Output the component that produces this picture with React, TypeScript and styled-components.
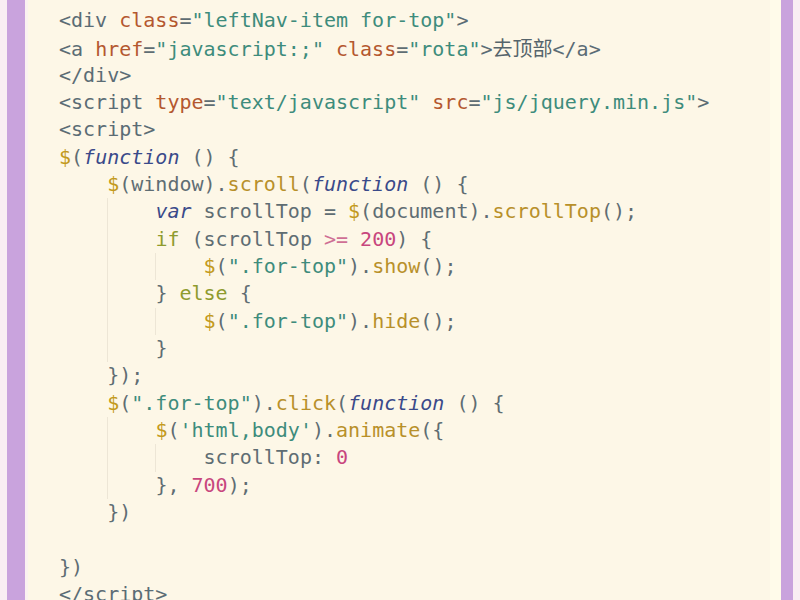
import React from "react";
import styled, { createGlobalStyle, css } from "styled-components";

const Global = createGlobalStyle`
  html, body { margin: 0; padding: 0; width: 800px; height: 600px; overflow: hidden; background: #fdf7e7; }
  #root { width: 800px; height: 600px; }
`;

type Kind = "t" | "a" | "s" | "d" | "m" | "k" | "c" | "n" | "o" | "p";
type Tok = [Kind, string];
type Line = { indent: number; toks: Tok[] };

const colors: Record<Kind, string> = {
  t: "#5b6c75",
  a: "#b4582f",
  s: "#3e8c7c",
  d: "#c39a1c",
  m: "#b8902a",
  k: "#3a4a8a",
  c: "#8f9b2e",
  n: "#c8467e",
  o: "#cf6f95",
  p: "#5f6d73",
};

const Shell = styled.div`
  display: flex;
  width: 800px;
  height: 600px;
  overflow: hidden;
  background: #faf0f2;
`;

const Edge = styled.div<{ $w: number; $bg: string }>`
  flex: 0 0 ${(p) => p.$w}px;
  background: ${(p) => p.$bg};
`;

const Panel = styled.div`
  flex: 1;
  background: #fdf7e7;
  padding: 7px 0 0 31px;
  overflow: hidden;
`;

const Code = styled.pre`
  margin: 0;
  font-family: "DejaVu Sans Mono", "Noto Sans CJK SC", monospace;
  font-size: 20px;
  line-height: 27.33px;
  color: #5f6d73;
`;

const Row = styled.div`
  height: 27.33px;
  white-space: pre;
`;

const Indent = styled.span<{ $guide: boolean }>`
  display: inline-block;
  width: 48.2px;
  height: 27.33px;
  vertical-align: top;
  box-sizing: border-box;
  ${(p) =>
    p.$guide &&
    css`
      border-left: 1px solid rgba(120, 110, 90, 0.12);
    `}
`;

const Tk = styled.span<{ $k: Kind }>`
  color: ${(p) => colors[p.$k]};
  ${(p) =>
    p.$k === "k" &&
    css`
      font-style: italic;
    `}
`;

const Cjk = styled.span`
  font-family: "Noto Sans CJK SC", sans-serif;
  font-size: 20px;
  color: #55646b;
`;

const lines: Line[] = [
  { indent: 0, toks: [["t", "<div"], ["a", " class"], ["p", "="], ["s", '"leftNav-item for-top"'], ["t", ">"]] },
  {
    indent: 0,
    toks: [
      ["t", "<a"], ["a", " href"], ["p", "="], ["s", '"javascript:;"'], ["a", " class"], ["p", "="],
      ["s", '"rota"'], ["t", ">"], ["p", "去顶部"], ["t", "</a>"],
    ],
  },
  { indent: 0, toks: [["t", "</div>"]] },
  {
    indent: 0,
    toks: [
      ["t", "<script"], ["a", " type"], ["p", "="], ["s", '"text/javascript"'], ["a", " src"], ["p", "="],
      ["s", '"js/jquery.min.js"'], ["t", ">"],
    ],
  },
  { indent: 0, toks: [["t", "<script>"]] },
  { indent: 0, toks: [["d", "$"], ["p", "("], ["k", "function"], ["p", " () {"]] },
  {
    indent: 1,
    toks: [["d", "$"], ["p", "(window)."], ["m", "scroll"], ["p", "("], ["k", "function"], ["p", " () {"]],
  },
  {
    indent: 2,
    toks: [["k", "var"], ["p", " scrollTop = "], ["d", "$"], ["p", "(document)."], ["m", "scrollTop"], ["p", "();"]],
  },
  { indent: 2, toks: [["c", "if"], ["p", " (scrollTop "], ["o", ">="], ["p", " "], ["n", "200"], ["p", ") {"]] },
  {
    indent: 3,
    toks: [["d", "$"], ["p", "("], ["s", '".for-top"'], ["p", ")."], ["m", "show"], ["p", "();"]],
  },
  { indent: 2, toks: [["p", "} "], ["c", "else"], ["p", " {"]] },
  {
    indent: 3,
    toks: [["d", "$"], ["p", "("], ["s", '".for-top"'], ["p", ")."], ["m", "hide"], ["p", "();"]],
  },
  { indent: 2, toks: [["p", "}"]] },
  { indent: 1, toks: [["p", "});"]] },
  {
    indent: 1,
    toks: [
      ["d", "$"], ["p", "("], ["s", '".for-top"'], ["p", ")."], ["m", "click"], ["p", "("], ["k", "function"], ["p", " () {"],
    ],
  },
  {
    indent: 2,
    toks: [["d", "$"], ["p", "("], ["s", "'html,body'"], ["p", ")."], ["m", "animate"], ["p", "({"]],
  },
  { indent: 3, toks: [["p", "scrollTop: "], ["n", "0"]] },
  { indent: 2, toks: [["p", "}, "], ["n", "700"], ["p", ");"]] },
  { indent: 1, toks: [["p", "})"]] },
  { indent: 0, toks: [] },
  { indent: 0, toks: [["p", "})"]] },
  { indent: 0, toks: [["t", "</script>"]] },
];

const isCjk = (s: string) => /[\u4e00-\u9fff]/.test(s);

export default function App() {
  return (
    <>
      <Global />
      <Shell>
        <Edge $w={7} $bg="#f9eef3" />
        <Edge $w={18} $bg="#c9a3dd" />
        <Edge $w={3} $bg="#fbf1f0" />
        <Panel>
          <Code>
            {lines.map((ln, i) => (
              <Row key={i}>
                {Array.from({ length: ln.indent }).map((_, j) => (
                  <Indent key={j} $guide={j > 0} />
                ))}
                {ln.toks.map(([k, text], j) =>
                  isCjk(text) ? (
                    <Cjk key={j}>{text}</Cjk>
                  ) : (
                    <Tk key={j} $k={k}>
                      {text}
                    </Tk>
                  )
                )}
              </Row>
            ))}
          </Code>
        </Panel>
        <Edge $w={11} $bg="#fffbea" />
        <Edge $w={12} $bg="#c9a3dd" />
        <Edge $w={7} $bg="#f9eef3" />
      </Shell>
    </>
  );
}
